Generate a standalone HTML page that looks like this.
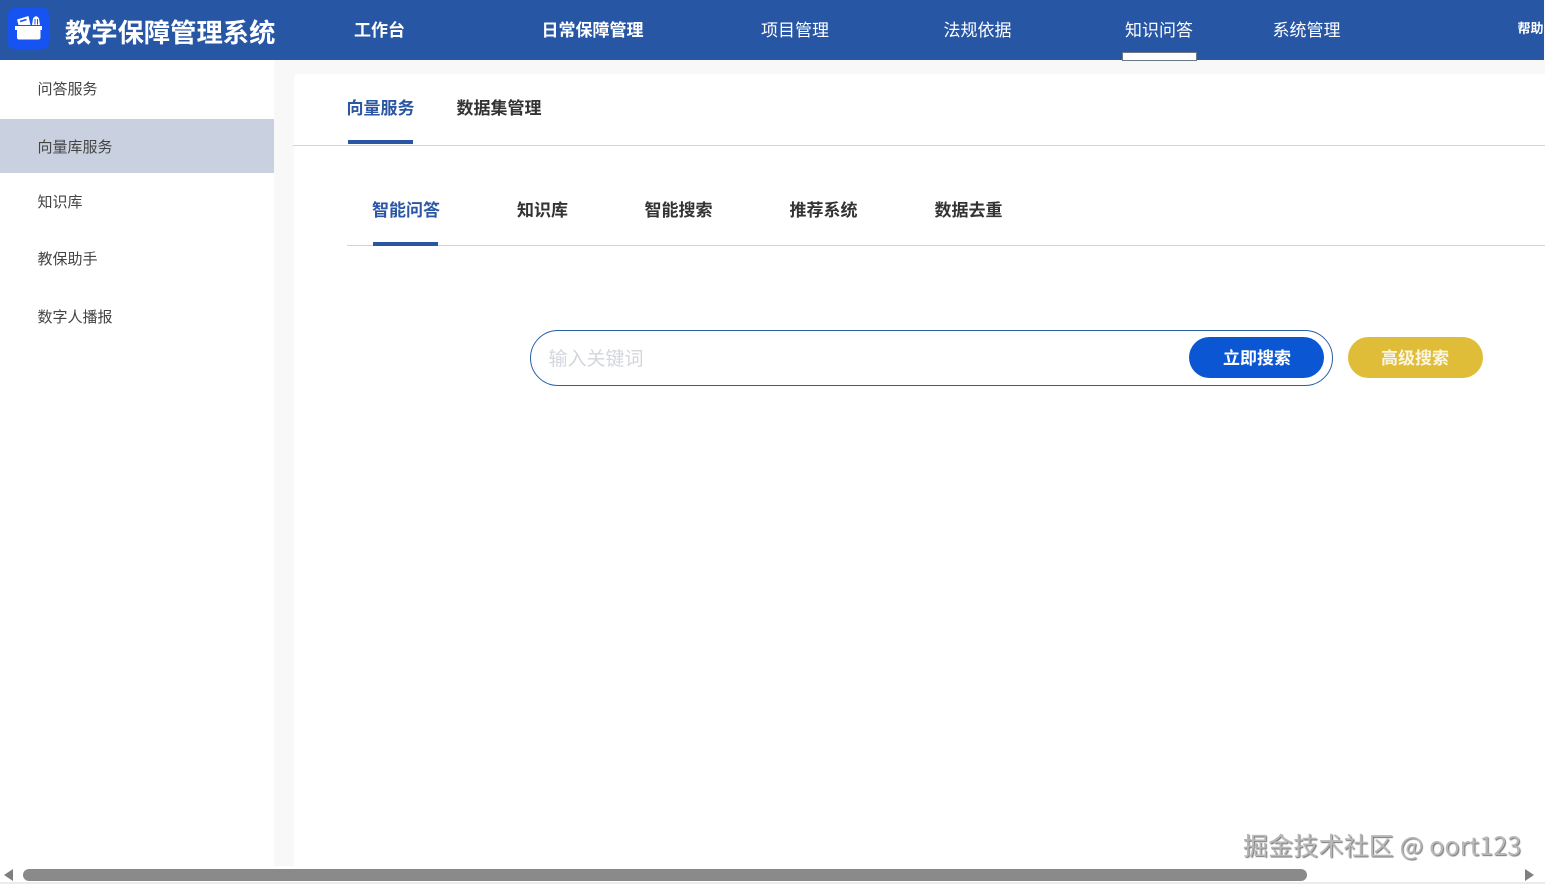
<!DOCTYPE html>
<html lang="zh">
<head>
<meta charset="utf-8">
<style>
html,body{margin:0;padding:0;width:1545px;height:884px;overflow:hidden;background:#f8f8f9;font-family:"Liberation Sans","Noto Sans CJK SC",sans-serif}
.t{position:absolute;white-space:nowrap;line-height:24px}
.b{position:absolute}
.h{color:#fff;font-size:17px;top:19px}
.s{color:#444;font-size:15px}
.tab{font-size:17px;font-weight:700;color:#333}
.act{color:#2a56a3}
</style>
</head>
<body>
<div class="b" style="left:0;top:0;width:1544px;height:60px;background:#2756a5"></div>
<svg class="b" style="left:8px;top:8px" width="41" height="41" viewBox="0 0 41 41">
<rect width="41" height="41" rx="7" fill="#1553f3"/>
<path d="M9 11.500L20.500 8L22.500 17H10.500Z" fill="#fff"/>
<path d="M12 13.500l6.500-2" stroke="#1553f3" stroke-width="1.600"/>
<path d="M24 17L25 10.500Q28 6 31 10.500L32 17Z" fill="#fff"/>
<path d="M27 11v5.500M29.500 11v5.500" stroke="#1553f3" stroke-width="1"/>
<path d="M7 18H34V22H32.500V29.500Q32.500 31.500 30 31.500H11Q9 31.500 9 29.500V22H7Z" fill="#fff"/>
</svg>
<div class="t" style="left:65px;top:18px;font-size:26.300px;line-height:30px;font-weight:700;color:#fff">教学保障管理系统</div>
<div class="t h" style="left:354px;font-weight:700">工作台</div>
<div class="t h" style="left:541.500px;font-weight:700">日常保障管理</div>
<div class="t h" style="left:761px">项目管理</div>
<div class="t h" style="left:943.500px">法规依据</div>
<div class="t h" style="left:1125px">知识问答</div>
<div class="t h" style="left:1272.500px">系统管理</div>
<div class="t" style="left:1517.500px;top:17px;font-size:13px;font-weight:700;color:#fff">帮助</div>
<div class="b" style="left:1122px;top:52px;width:73px;height:7px;background:#fff;border:1px solid #6b7686"></div>

<div class="b" style="left:0;top:60px;width:274px;height:806px;background:#fff"></div>
<div class="b" style="left:0;top:119px;width:274px;height:54px;background:#c9d1e1"></div>
<div class="t s" style="left:37.500px;top:78px">问答服务</div>
<div class="t s" style="left:37.500px;top:136px">向量库服务</div>
<div class="t s" style="left:37.500px;top:191px">知识库</div>
<div class="t s" style="left:37.500px;top:248px">教保助手</div>
<div class="t s" style="left:37.500px;top:306px">数字人播报</div>

<div class="b" style="left:294px;top:74px;width:1251px;height:810px;background:#fff;border-top-left-radius:5px"></div>
<div class="b" style="left:293px;top:145px;width:1252px;height:1px;background:#d2d4d9"></div>
<div class="t tab act" style="left:346.500px;top:97px">向量服务</div>
<div class="t tab" style="left:456.500px;top:97px">数据集管理</div>
<div class="b" style="left:348px;top:140px;width:65px;height:4px;background:#2a56a3"></div>

<div class="b" style="left:347px;top:245px;width:1198px;height:1px;background:#d2d4d9"></div>
<div class="t tab act" style="left:372px;top:199px">智能问答</div>
<div class="t tab" style="left:517px;top:199px">知识库</div>
<div class="t tab" style="left:644.500px;top:199px">智能搜索</div>
<div class="t tab" style="left:789.500px;top:199px">推荐系统</div>
<div class="t tab" style="left:934.500px;top:199px">数据去重</div>
<div class="b" style="left:373px;top:242px;width:65px;height:4px;background:#2a56a3"></div>

<div class="b" style="left:530px;top:330px;width:801px;height:54px;border:1px solid #2a5fa8;border-radius:28px;background:#fff"></div>
<div class="t" style="left:548.500px;top:348px;font-size:19px;color:#d3d6dc">输入关键词</div>
<div class="b" style="left:1189px;top:337px;width:135px;height:41px;border-radius:21px;background:#0a56d3"></div>
<div class="t" style="left:1223px;top:347px;font-size:17px;font-weight:700;color:#fff">立即搜索</div>
<div class="b" style="left:1348px;top:337px;width:135px;height:41px;border-radius:21px;background:#e0bd38"></div>
<div class="t" style="left:1381px;top:347px;font-size:17px;font-weight:700;color:#fbf6e2">高级搜索</div>

<div class="b" style="left:0;top:866px;width:1545px;height:18px;background:#fff"></div>
<div class="b" style="left:0;top:882px;width:1545px;height:2px;background:#ececec"></div>
<div class="b" style="left:23px;top:869px;width:1284px;height:12px;border-radius:6px;background:#8a8a8a"></div>
<svg class="b" style="left:3px;top:868px" width="11" height="14"><path d="M10 1V13L1 7Z" fill="#7f7f7f"/></svg>
<svg class="b" style="left:1524px;top:868px" width="11" height="14"><path d="M1 1V13L10 7Z" fill="#7f7f7f"/></svg>

<div class="t" style="left:1243px;top:830px;font-family:'Noto Sans CJK SC',sans-serif;font-size:25px;line-height:30px;letter-spacing:.15px;color:#b8b8b8;text-shadow:1px 1px 1px #777">掘金技术社区 @ oort123</div>
</body>
</html>
